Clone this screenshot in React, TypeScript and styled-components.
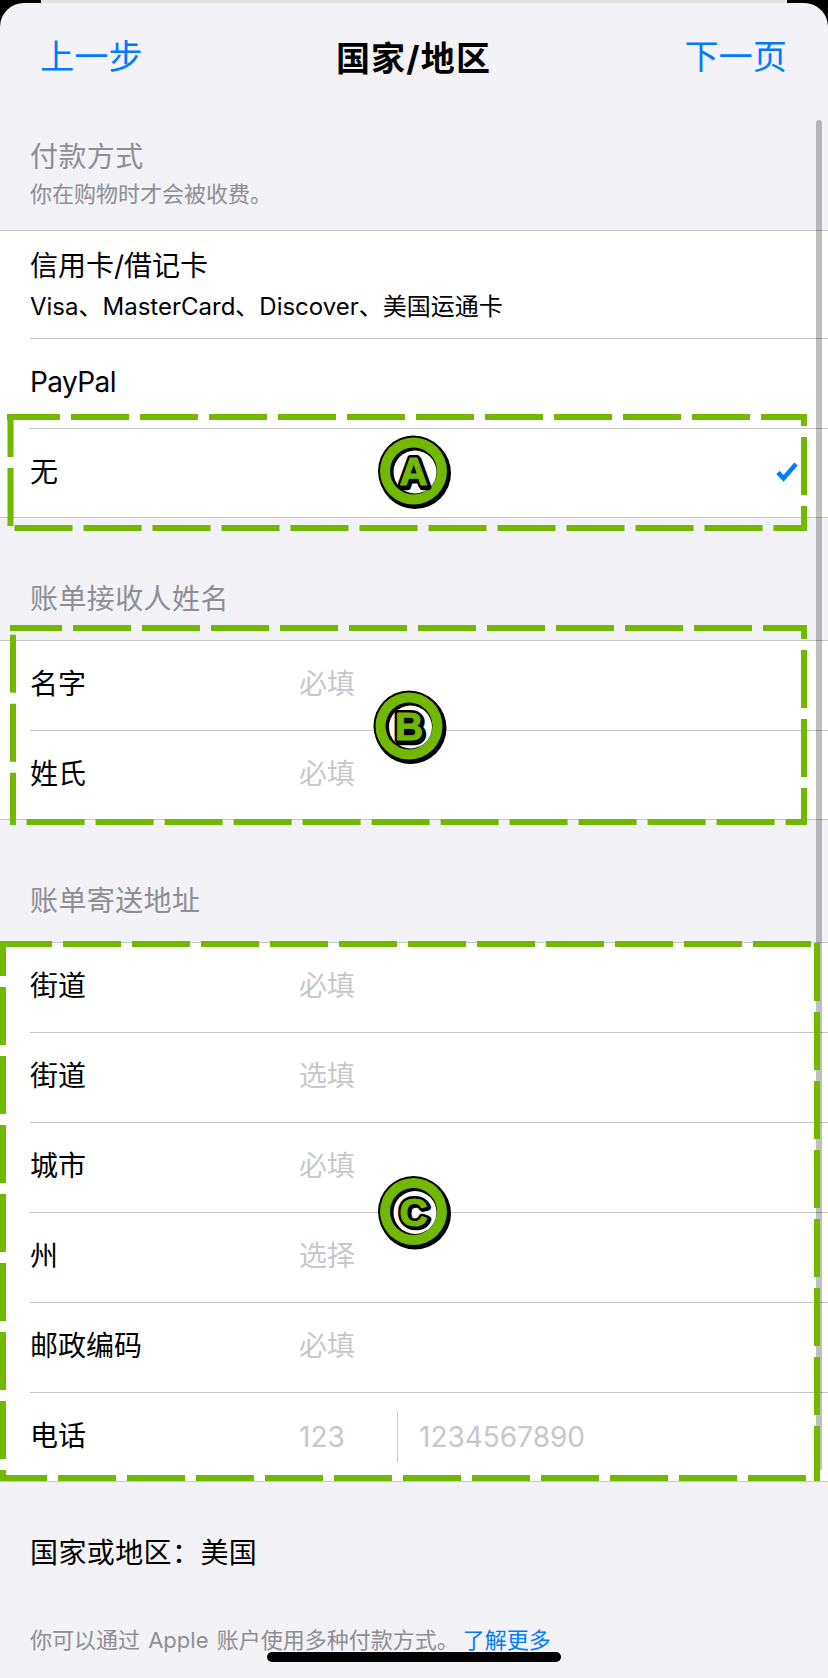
import styled, { createGlobalStyle } from "styled-components";

const GREEN = "#72b700";
const FONT = `Inter, "Noto Sans CJK SC", "Noto Sans", sans-serif`;

const GlobalStyle = createGlobalStyle`
    html, body {
        margin: 0;
        padding: 0;
        background: #000;
    }
    body {
        font-family: ${FONT};
    }
`;

const Screen = styled.div`
    position: relative;
    width: 828px;
    height: 1678px;
    overflow: hidden;
    padding-top: 3px;
    box-sizing: border-box;
    background: linear-gradient(to right, #000 41px, #e2e2e2 41px, #e2e2e2 787px, #000 787px);
`;

const Sheet = styled.div`
    height: 1675px;
    background: #f2f2f7;
    border-radius: 24px 24px 0 0;
`;

const NavBar = styled.nav`
    display: grid;
    grid-template-columns: 1fr auto 1fr;
    align-items: center;
    height: 110px;
    padding: 0 41px 0 40px;
    font-size: 34.2px;
`;

const NavLink = styled.a<{ $right?: boolean }>`
    margin-bottom: 8px;
    color: #007aff;
    text-align: ${props => (props.$right ? "right" : "left")};
`;

const NavTitle = styled.h1`
    margin: 0 0 4px;
    font-size: 34px;
    font-weight: 700;
    letter-spacing: 1.2px;
    color: #000;
`;

const SectionHeader = styled.header<{ $top: number; $bottom: number }>`
    padding: ${props => props.$top}px 30px ${props => props.$bottom}px;
`;

const SectionTitle = styled.h2`
    margin: 0;
    font-size: 28px;
    font-weight: 400;
    line-height: 40px;
    letter-spacing: 0.4px;
    color: #8e8e93;
`;

const SectionNote = styled.p`
    margin: 2px 0 0;
    font-size: 22px;
    line-height: 30px;
    color: #8e8e93;
`;

const Group = styled.section`
    background: #fff;
    border-top: 1px solid #c6c6c8;
    border-bottom: 1px solid #c6c6c8;
`;

const Row = styled.div<{ $height?: number; $last?: boolean }>`
    display: flex;
    align-items: center;
    box-sizing: border-box;
    height: ${props => props.$height ?? 90}px;
    margin-left: 30px;
    border-bottom: ${props => (props.$last ? "none" : "1px solid #c6c6c8")};
    color: #000;
    font-size: 28px;
`;

const OptionText = styled.div`
    flex: 1;
`;

const OptionTitle = styled.div`
    font-size: 28px;
    line-height: 40px;
`;

const OptionDetail = styled.div`
    margin-top: 5px;
    font-size: 24px;
    line-height: 32px;
`;

const OptionPlain = styled.span<{ $latin?: boolean }>`
    flex: 1;
    margin-bottom: ${props => (props.$latin ? 4 : 7)}px;
    letter-spacing: ${props => (props.$latin ? "-0.6px" : "0")};
`;

const CheckMark = styled.svg`
    width: 24px;
    height: 22px;
    margin: 0 29px 2px 0;
`;

const Label = styled.span`
    width: 269px;
    flex: none;
    margin-bottom: 7px;
`;

const Placeholder = styled.span`
    margin-bottom: 7px;
    color: #c7c7cc;
`;

const AreaCode = styled.span`
    width: 98px;
    flex: none;
    color: #c7c7cc;
`;

const PhoneDivider = styled.i`
    width: 1px;
    height: 50px;
    margin-right: 21px;
    flex: none;
    background: #c6c6c8;
`;

const PhoneNumber = styled.span`
    color: #c7c7cc;
`;

const Country = styled.div`
    padding: 51px 30px 0;
    font-size: 28px;
    line-height: 40px;
    letter-spacing: 0.4px;
    color: #000;
`;

const FootNote = styled.p`
    margin: 52px 0 0;
    padding: 0 30px;
    font-size: 22px;
    line-height: 30px;
    word-spacing: 2px;
    color: #8e8e93;
`;

const LearnMore = styled.a`
    margin-left: 4px;
    color: #007aff;
`;

const ScrollThumb = styled.div`
    position: absolute;
    top: 120px;
    right: 6px;
    width: 6px;
    height: 1351px;
    border-radius: 3px;
    background: rgba(0, 0, 0, 0.25);
`;

const HomeIndicator = styled.div`
    position: absolute;
    left: 267px;
    top: 1652px;
    width: 294px;
    height: 10px;
    border-radius: 5px;
    background: #000;
`;

const Annotations = styled.svg`
    position: absolute;
    inset: 0;
    pointer-events: none;
`;

const BadgeLetter = styled.text`
    font-family: "Liberation Sans", sans-serif;
    font-size: 39px;
    font-weight: 700;
    text-anchor: middle;
    stroke-linejoin: round;
`;

// each side of a marker box: from corner to corner, with the phase of the dash seen at its start
const dashSides = [
    // A
    { x1: 7, y1: 417, x2: 807, y2: 417, offset: 5 },
    { x1: 804, y1: 414, x2: 804, y2: 531, offset: 46 },
    { x1: 807, y1: 528, x2: 14, y2: 528, offset: 24.5 },
    { x1: 10.5, y1: 531, x2: 10.5, y2: 414, offset: 64 },
    // B
    { x1: 10, y1: 628, x2: 807, y2: 628, offset: 6 },
    { x1: 804, y1: 625, x2: 804, y2: 825, offset: 44 },
    { x1: 807, y1: 822, x2: 16, y2: 822, offset: 36.6 },
    { x1: 13, y1: 825, x2: 13, y2: 625, offset: 5.7 },
    // C
    { x1: 0, y1: 944, x2: 811, y2: 944, offset: 6 },
    { x1: 817, y1: 943, x2: 817, y2: 1481, offset: 0 },
    { x1: 806, y1: 1478, x2: 0, y2: 1478, offset: 0 },
    { x1: 3, y1: 1481, x2: 3, y2: 941, offset: 47 },
];

const badges = [
    { letter: "A", x: 413.5, y: 471 },
    { letter: "B", x: 409, y: 726 },
    { letter: "C", x: 413.5, y: 1211.5 },
];

function Badge({ letter, x, y }: { letter: string; x: number; y: number }) {
    return (
        <g transform={`translate(${x} ${y})`}>
            <circle cx={1.5} cy={2} r={36} fill="#000" />
            <circle r={35.5} fill="#000" />
            <circle r={33.5} fill={GREEN} />
            <circle r={23.5} fill="#000" />
            <circle cx={1.5} cy={1} r={21.5} fill="#fff" />
            <BadgeLetter x={1.5} y={15.5} fill="#000" stroke="#000" strokeWidth={6.5}>{letter}</BadgeLetter>
            <BadgeLetter x={0} y={14} fill="#000" stroke="#000" strokeWidth={6}>{letter}</BadgeLetter>
            <BadgeLetter x={0} y={14} fill={GREEN} stroke={GREEN} strokeWidth={1.2}>{letter}</BadgeLetter>
        </g>
    );
}

function App() {
    return (
        <Screen>
            <GlobalStyle />
            <Sheet>
                <NavBar>
                    <NavLink>上一步</NavLink>
                    <NavTitle>国家/地区</NavTitle>
                    <NavLink $right>下一页</NavLink>
                </NavBar>

                <SectionHeader $top={24} $bottom={21}>
                    <SectionTitle>付款方式</SectionTitle>
                    <SectionNote>你在购物时才会被收费。</SectionNote>
                </SectionHeader>
                <Group>
                    <Row $height={108}>
                        <OptionText>
                            <OptionTitle>信用卡/借记卡</OptionTitle>
                            <OptionDetail>Visa、MasterCard、Discover、美国运通卡</OptionDetail>
                        </OptionText>
                    </Row>
                    <Row><OptionPlain $latin>PayPal</OptionPlain></Row>
                    <Row $height={88} $last>
                        <OptionPlain>无</OptionPlain>
                        <CheckMark viewBox="0 0 24 22">
                            <path d="M3 11.5 L8.5 17.5 L21 3" fill="none" stroke="#007aff" strokeWidth={4.4} />
                        </CheckMark>
                    </Row>
                </Group>

                <SectionHeader $top={61} $bottom={21}>
                    <SectionTitle>账单接收人姓名</SectionTitle>
                </SectionHeader>
                <Group>
                    <Row><Label>名字</Label><Placeholder>必填</Placeholder></Row>
                    <Row $height={88} $last><Label>姓氏</Label><Placeholder>必填</Placeholder></Row>
                </Group>

                <SectionHeader $top={61} $bottom={21}>
                    <SectionTitle>账单寄送地址</SectionTitle>
                </SectionHeader>
                <Group>
                    <Row><Label>街道</Label><Placeholder>必填</Placeholder></Row>
                    <Row><Label>街道</Label><Placeholder>选填</Placeholder></Row>
                    <Row><Label>城市</Label><Placeholder>必填</Placeholder></Row>
                    <Row><Label>州</Label><Placeholder>选择</Placeholder></Row>
                    <Row><Label>邮政编码</Label><Placeholder>必填</Placeholder></Row>
                    <Row $height={88} $last>
                        <Label>电话</Label>
                        <AreaCode>123</AreaCode>
                        <PhoneDivider />
                        <PhoneNumber>1234567890</PhoneNumber>
                    </Row>
                </Group>

                <Country>国家或地区：美国</Country>
                <FootNote>你可以通过 Apple 账户使用多种付款方式。<LearnMore>了解更多</LearnMore></FootNote>
            </Sheet>

            <ScrollThumb />
            <Annotations width={828} height={1678} viewBox="0 0 828 1678">
                {dashSides.map((side, i) => (
                    <line
                        key={i}
                        x1={side.x1}
                        y1={side.y1}
                        x2={side.x2}
                        y2={side.y2}
                        stroke={GREEN}
                        strokeWidth={6}
                        strokeDasharray="58 11"
                        strokeDashoffset={side.offset}
                    />
                ))}
                {badges.map(badge => (
                    <Badge key={badge.letter} {...badge} />
                ))}
            </Annotations>
            <HomeIndicator />
        </Screen>
    );
}

export default App;
